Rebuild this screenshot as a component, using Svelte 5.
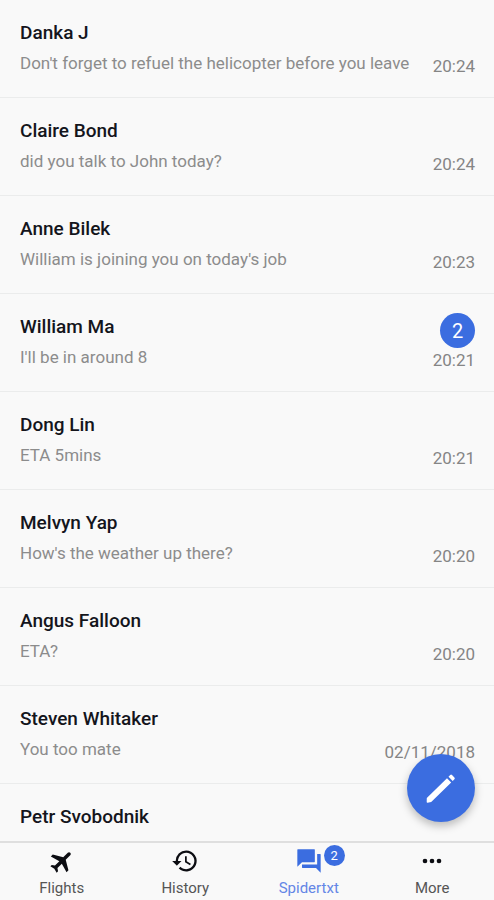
<script lang="ts">
  type Message = { name: string; text: string; time: string; unread?: number };
  type Tab = { id: string; label: string; badge?: number };

  const messages: Message[] = [
    { name: "Danka J", text: "Don't forget to refuel the helicopter before you leave", time: "20:24" },
    { name: "Claire Bond", text: "did you talk to John today?", time: "20:24" },
    { name: "Anne Bilek", text: "William is joining you on today's job", time: "20:23" },
    { name: "William Ma", text: "I'll be in around 8", time: "20:21", unread: 2 },
    { name: "Dong Lin", text: "ETA 5mins", time: "20:21" },
    { name: "Melvyn Yap", text: "How's the weather up there?", time: "20:20" },
    { name: "Angus Falloon", text: "ETA?", time: "20:20" },
    { name: "Steven Whitaker", text: "You too mate", time: "02/11/2018" },
    { name: "Petr Svobodnik", text: "", time: "" },
  ];

  const tabs: Tab[] = [
    { id: "flights", label: "Flights" },
    { id: "history", label: "History" },
    { id: "spidertxt", label: "Spidertxt", badge: 2 },
    { id: "more", label: "More" },
  ];

  let active = $state("spidertxt");
</script>

<div class="screen">
  <main>
    <ul class="messages">
      {#each messages as m}
        <li class="message">
          <div class="body">
            <h2>{m.name}</h2>
            <p>{m.text}</p>
          </div>
          <div class="meta">
            {#if m.unread}
              <span class="unread">{m.unread}</span>
            {/if}
            <time>{m.time}</time>
          </div>
        </li>
      {/each}
    </ul>
  </main>

  <button class="compose" aria-label="New message">
    <svg viewBox="0 0 32 32" width="32" height="32" fill="currentColor">
      <path d="M1.800 26L22 6.200l4.200 4.200L6.200 30l-3.600.700q-1 .1-.9-.9z" />
      <path d="M23.500 4.700l1.700-1.700q.9-.9 1.800 0l2.400 2.400q.9.9 0 1.800l-1.700 1.700z" />
    </svg>
  </button>

  <nav>
    {#each tabs as tab}
      <button class="tab" class:active={active === tab.id} onclick={() => (active = tab.id)}>
        <span class="icon">
          <svg viewBox="0 0 24 24" width="28" height="28" fill="currentColor" aria-hidden="true">
            {#if tab.id === "flights"}
              <path
                transform="rotate(45 12 12)"
                d="M21.500 16v-2.300l-8-4.700V3.500c0-.83-.67-1.500-1.500-1.500s-1.500.67-1.500 1.500V9l-8 4.700V16l8-2.300V19l-2.300 1.600V22.300l3.800-1 3.800 1v-1.700L13.500 19v-5.300l8 2.300z"
              />
            {:else if tab.id === "history"}
              <path
                d="M13 3a9 9 0 0 0-9 9H1l3.890 3.890.07.14L9 12H6a7 7 0 1 1 2.060 4.940l-1.420 1.420A9 9 0 1 0 13 3zm-1 5v5l4.280 2.540.72-1.210-3.500-2.080V8H12z"
              />
            {:else if tab.id === "spidertxt"}
              <path
                d="M21.600 6H19v9H6v2.600c0 .2.200.4.400.4H18l4 4V6.400c0-.2-.2-.4-.4-.4zM17 12.600V2.400c0-.2-.2-.4-.4-.4H2.400c-.2 0-.4.2-.4.4V17l4-4h10.600c.2 0 .4-.2.4-.4z"
              />
            {:else}
              <circle cx="6" cy="12" r="2" />
              <circle cx="12" cy="12" r="2" />
              <circle cx="18" cy="12" r="2" />
            {/if}
          </svg>
          {#if tab.badge}
            <span class="badge">{tab.badge}</span>
          {/if}
        </span>
        <span>{tab.label}</span>
      </button>
    {/each}
  </nav>
</div>

<style>
  :global(body) {
    background: #f9f9f9;
  }
  .screen {
    display: flex;
    flex-direction: column;
    height: 100vh;
    font-family: Roboto, "Liberation Sans", sans-serif;
    background: #f9f9f9;
  }
  main {
    flex: 1;
    min-height: 0;
    overflow: hidden;
  }
  .messages {
    margin: 0;
    padding: 0;
    list-style: none;
  }
  .message {
    display: flex;
    justify-content: space-between;
    gap: 12px;
    box-sizing: border-box;
    height: 98px;
    padding: 20px 19px 20px 20px;
    border-bottom: 1px solid #ebecec;
  }
  .body {
    min-width: 0;
    white-space: nowrap;
  }
  h2 {
    margin: 0 0 6px;
    font-size: 19px;
    font-weight: 500;
    line-height: 26px;
    color: #14151c;
  }
  p {
    margin: 0;
    font-size: 17px;
    line-height: 22px;
    color: #8c8c8c;
  }
  .meta {
    display: flex;
    flex-direction: column;
    align-items: flex-end;
    justify-content: flex-end;
    font-size: 17px;
    line-height: 22px;
    color: #858585;
  }
  .unread {
    width: 35px;
    height: 35px;
    margin-bottom: 1px;
    border-radius: 50%;
    background: #3b6de0;
    color: #fff;
    font-size: 20px;
    line-height: 36px;
    text-align: center;
  }
  .compose {
    position: fixed;
    right: 19px;
    bottom: 78px;
    display: flex;
    align-items: center;
    justify-content: center;
    width: 68px;
    height: 68px;
    padding: 0;
    border: none;
    border-radius: 50%;
    background: #3b6de0;
    color: #fff;
    box-shadow: 0 4px 8px rgba(0, 0, 0, 0.25);
  }
  nav {
    display: flex;
    box-sizing: border-box;
    height: 59px;
    border-top: 2px solid #dfdfdf;
    background: #f9f9f9;
  }
  .tab {
    flex: 1;
    display: flex;
    flex-direction: column;
    align-items: center;
    gap: 4px;
    padding: 4px 0 0;
    border: none;
    background: none;
    font-family: inherit;
    font-size: 15px;
    line-height: 18px;
    color: #555;
  }
  .icon {
    position: relative;
    height: 28px;
    color: #0c0d12;
  }
  .icon svg {
    display: block;
  }
  .active {
    color: #6486e6;
  }
  .active .icon {
    color: #3b6de0;
  }
  .badge {
    position: absolute;
    top: -2px;
    left: 29px;
    width: 21px;
    height: 21px;
    border-radius: 50%;
    background: #3b6de0;
    color: #fff;
    font-size: 13px;
    line-height: 21px;
    text-align: center;
  }
</style>
